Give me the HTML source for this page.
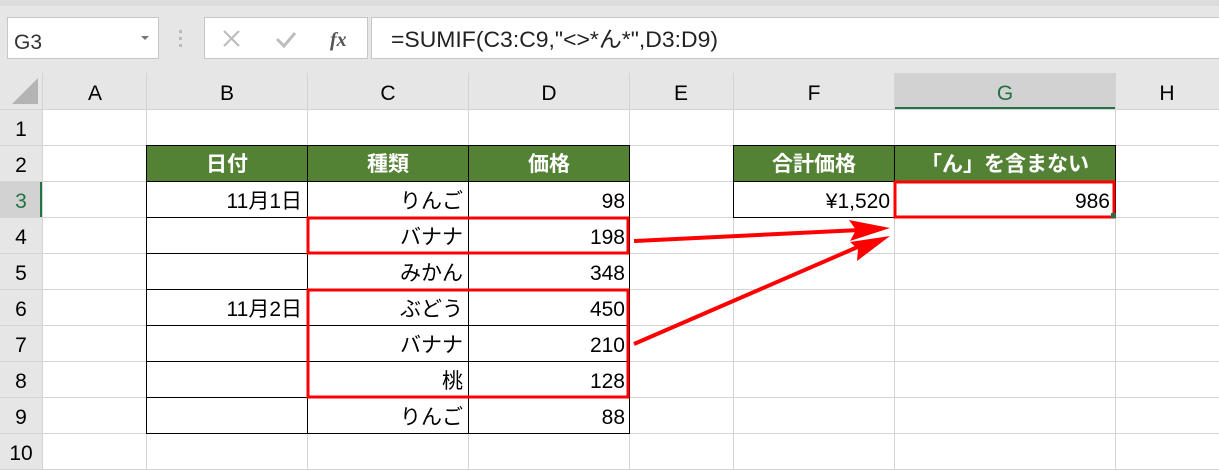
<!DOCTYPE html>
<html><head><meta charset="utf-8"><style>
html,body{margin:0;padding:0;width:1219px;height:470px;overflow:hidden;background:#fff}
svg{display:block}
text{font-family:"Liberation Sans","Noto Sans CJK JP",sans-serif;font-size:21px;fill:#000}
.h{fill:#fff;font-weight:bold;text-anchor:middle}
.r{text-anchor:end}
.c{text-anchor:middle}
</style></head><body>
<svg width="1219" height="470" viewBox="0 0 1219 470" xmlns="http://www.w3.org/2000/svg">
<rect x="0" y="0" width="1219" height="73" fill="#e6e6e6"/>
<rect x="0" y="0" width="1219" height="6" fill="#dcdcdc"/>
<rect x="7.5" y="17.5" width="151" height="41" fill="#fff" stroke="#c6c6c6"/>
<text x="14" y="49" style="font-size:21px;fill:#333">G3</text>
<path d="M141 36 l4 4 l4 -4z" fill="#777"/>
<rect x="179" y="30" width="3" height="3" fill="#bbb"/><rect x="179" y="37" width="3" height="3" fill="#bbb"/><rect x="179" y="44" width="3" height="3" fill="#bbb"/>
<rect x="204.5" y="17.5" width="163" height="41" fill="#fff" stroke="#c6c6c6"/>
<path d="M224 31 l15 15 M239 31 l-15 15" stroke="#bdbdbd" stroke-width="2.2"/>
<path d="M277 39 l7 7 l11 -13" stroke="#bdbdbd" stroke-width="3" fill="none"/>
<text x="330" y="46" style="font-family:'Liberation Serif',serif;font-style:italic;font-weight:bold;font-size:20px;fill:#555">fx</text>
<rect x="371.5" y="17.5" width="850" height="41" fill="#fff" stroke="#c6c6c6"/>
<text x="391" y="47" textLength="327" lengthAdjust="spacingAndGlyphs" style="font-size:22px;fill:#222">=SUMIF(C3:C9,"&lt;&gt;*ん*",D3:D9)</text>
<rect x="0" y="73" width="1219" height="36" fill="#e6e6e6"/>
<rect x="894" y="73" width="221" height="36" fill="#d2d2d2"/>
<rect x="894" y="107" width="221" height="2" fill="#217346"/>
<path d="M12 104 L38 104 L38 78 Z" fill="#b4b4b4"/>
<rect x="0" y="109" width="42" height="361" fill="#e6e6e6"/>
<rect x="0" y="181" width="42" height="36" fill="#d2d2d2"/>
<rect x="40" y="181" width="2" height="36" fill="#217346"/>
<g stroke="#d4d4d4" stroke-width="1">
<path d="M42.5 73V470 M146.5 73V470 M307.5 73V470 M468.5 73V470 M629.5 73V470 M733.5 73V470 M894.5 73V470 M1115.5 73V470"/>
<path d="M0 109.5H1219 M0 145.5H1219 M0 181.5H1219 M0 217.5H1219 M0 253.5H1219 M0 289.5H1219 M0 325.5H1219 M0 361.5H1219 M0 397.5H1219 M0 433.5H1219 M0 469.5H1219"/>
</g>
<g style="fill:#222">
<text class="c" x="95" y="100">A</text><text class="c" x="227" y="100">B</text><text class="c" x="388" y="100">C</text><text class="c" x="549" y="100">D</text><text class="c" x="681" y="100">E</text><text class="c" x="814" y="100">F</text><text class="c" x="1005" y="100" style="fill:#217346">G</text><text class="c" x="1167" y="100">H</text>
<text class="c" x="21" y="136">1</text><text class="c" x="21" y="172">2</text><text class="c" x="21" y="208" style="fill:#217346">3</text><text class="c" x="21" y="244">4</text><text class="c" x="21" y="280">5</text><text class="c" x="21" y="316">6</text><text class="c" x="21" y="352">7</text><text class="c" x="21" y="388">8</text><text class="c" x="21" y="424">9</text><text class="c" x="21" y="460">10</text>
</g>
<rect x="146" y="145" width="483" height="36" fill="#548235"/>
<rect x="733" y="145" width="382" height="36" fill="#548235"/>
<g stroke="#000" stroke-width="1" fill="none">
<path d="M146.5 145V433 M307.5 145V433 M468.5 145V433 M629.5 145V433"/>
<path d="M146 145.5H630 M146 181.5H630 M146 217.5H630 M146 253.5H630 M146 289.5H630 M146 325.5H630 M146 361.5H630 M146 397.5H630 M146 433.5H630"/>
<path d="M733.5 145V218 M894.5 145V218 M1115.5 145V218 M733 145.5H1116 M733 181.5H1116 M733 217.5H1116"/>
</g>
<text class="h" x="227" y="171">日付</text><text class="h" x="388" y="171">種類</text><text class="h" x="549" y="171">価格</text>
<text class="h" x="814" y="171">合計価格</text><text class="h" x="1005" y="171">「ん」を含まない</text>
<text class="r" x="302" y="208">11月1日</text><text class="r" x="302" y="316">11月2日</text>
<text class="r" x="463" y="208">りんご</text><text class="r" x="463" y="244">バナナ</text><text class="r" x="463" y="280">みかん</text><text class="r" x="463" y="316">ぶどう</text><text class="r" x="463" y="352">バナナ</text><text class="r" x="463" y="388">桃</text><text class="r" x="463" y="424">りんご</text>
<text class="r" x="625" y="208">98</text><text class="r" x="625" y="244">198</text><text class="r" x="625" y="280">348</text><text class="r" x="625" y="316">450</text><text class="r" x="625" y="352">210</text><text class="r" x="625" y="388">128</text><text class="r" x="625" y="424">88</text>
<text class="r" x="890" y="208">¥1,520</text><text class="r" x="1110" y="208">986</text>
<g stroke="#f00" stroke-width="3" fill="none">
<rect x="308" y="218" width="320" height="35"/>
<rect x="308" y="290" width="320" height="107"/>
<rect x="895" y="182" width="219" height="35"/>
</g>
<rect x="1111" y="213" width="5" height="5" fill="#217346"/>
<g stroke="#f00" stroke-width="4" fill="#f00">
<path d="M634 241 L860 230"/>
<path d="M634 344 L860 246"/>
</g>
<path d="M890 228 L849 220 L856 230 L850 241 Z" fill="#f00"/>
<path d="M890 236 L850 242 L858 249 L857 261 Z" fill="#f00"/>
</svg>
</body></html>
